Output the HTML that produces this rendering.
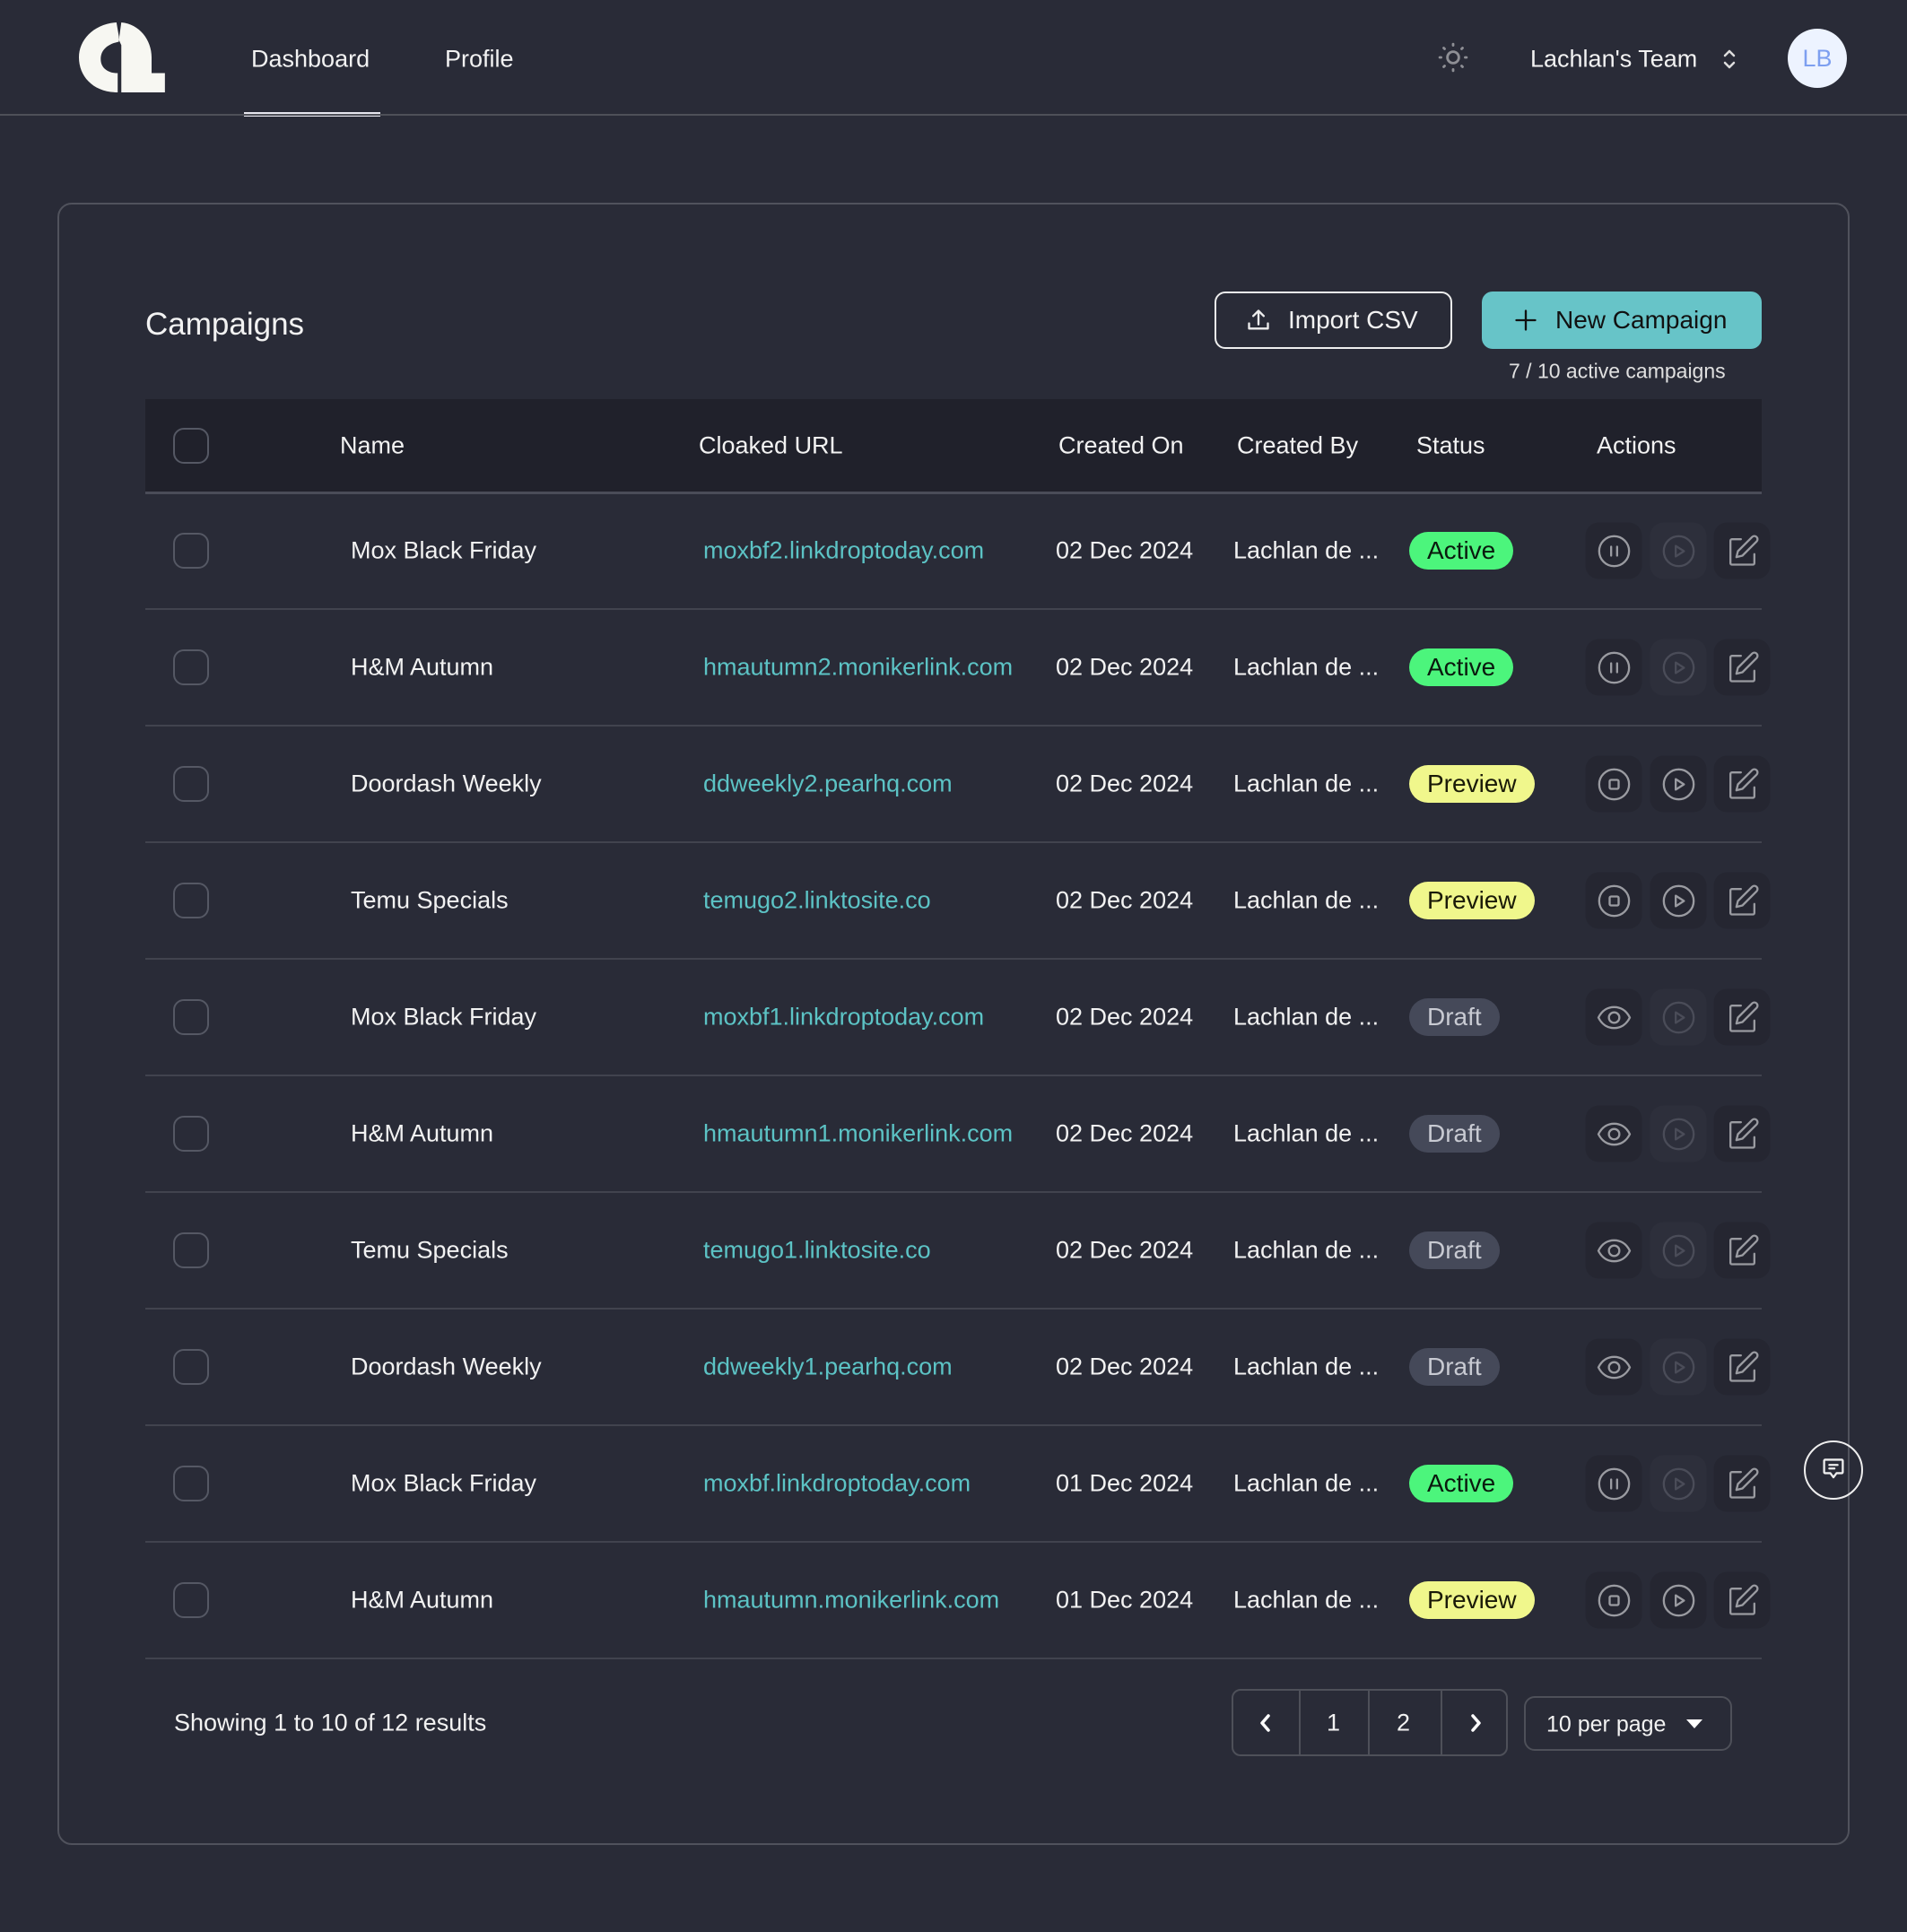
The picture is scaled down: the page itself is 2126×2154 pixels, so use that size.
<!DOCTYPE html>
<html><head><meta charset="utf-8"><style>
*{box-sizing:border-box;margin:0;padding:0}
body{width:2126px;height:2154px;background:#292b37;font-family:"Liberation Sans",sans-serif;color:#f2f2f2;position:relative;overflow:hidden}
.a{position:absolute}
.t{position:absolute;white-space:nowrap;transform:translateY(-50%)}
.hdr{font-size:27px}
.row{font-size:27px}
.cb{position:absolute;width:40px;height:40px;border:2px solid #555864;border-radius:12px}
.badge{position:absolute;height:42px;border-radius:21px;font-size:28px;line-height:42px;padding:0 20px;transform:translateY(-50%)}
.btn{position:absolute;width:63px;height:63px;border-radius:15px;background:#252631;transform:translate(-50%,-50%);display:flex;align-items:center;justify-content:center}
.btn.dis{background:#2d2f3b}
.line{position:absolute;left:162px;width:1802px;height:2px;background:#41434e}
</style></head><body>
<!-- header -->
<svg class="a" style="left:0;top:0" width="220" height="128"><g fill="#f7f7f2" transform="translate(88,25) scale(1.35,0.975) translate(-66,-24)">
<path d="M97 24 C78 26 66 44 66 64 C66 86 78 104 98 104 L98 82 C90 82 84 76 84 66 C84 56 89 49 99 46 L99 40 Z"/>
<path d="M101 24 C116 26 126 44 126 64 L126 82 L137 82 L137 104 L101 104 L101 50 L99 44 Z"/></g></svg>
<div class="t" style="left:280px;top:66px;font-size:27px">Dashboard</div>
<div class="a" style="left:272px;top:125px;width:152px;height:5px;background:#e6e6ee"></div>
<div class="t" style="left:496px;top:66px;font-size:27px">Profile</div>
<div class="a" style="left:0;top:127px;width:2126px;height:2px;background:#4e5058"></div>
<svg class="a" style="left:1603px;top:47px" width="34" height="34" viewBox="0 0 24 24" fill="none" stroke="#8e8f95" stroke-width="2" stroke-linecap="round"><circle cx="12" cy="12" r="4.5"/><path d="M12 1.5v1M12 21.5v1M1.5 12h1M21.5 12h1M4.6 4.6l.7.7M18.7 18.7l.7.7M4.6 19.4l.7-.7M18.7 5.3l.7-.7"/></svg>
<div class="t" style="left:1706px;top:66px;font-size:27px">Lachlan's Team</div>
<svg class="a" style="left:1919px;top:52px" width="18" height="28" viewBox="0 0 18 28" fill="none" stroke="#ddd" stroke-width="2.5" stroke-linecap="round" stroke-linejoin="round"><path d="M4 10l5-5 5 5M4 18l5 5 5-5"/></svg>
<div class="a" style="left:1993px;top:32px;width:66px;height:66px;border-radius:50%;background:#edf3ff;color:#7d9ff0;font-size:27px;line-height:66px;text-align:center">LB</div>
<!-- card -->
<div class="a" style="left:64px;top:226px;width:1998px;height:1831px;border:2px solid #50525c;border-radius:16px;background:#292b37"></div>
<div class="t" style="left:162px;top:362px;font-size:35px;font-weight:500">Campaigns</div>
<div class="a" style="left:1354px;top:325px;width:265px;height:64px;border:2px solid #eee;border-radius:12px"></div>
<svg class="a" style="left:1389px;top:343px" width="28" height="28" viewBox="0 0 24 24" fill="none" stroke="#eee" stroke-width="2" stroke-linecap="round" stroke-linejoin="round"><path d="M3 15v5h18v-5M12 16V3M7 8l5-5 5 5"/></svg>
<div class="t" style="left:1436px;top:357px;font-size:28px">Import CSV</div>
<div class="a" style="left:1652px;top:325px;width:312px;height:64px;border-radius:12px;background:#67c4c8"></div>
<svg class="a" style="left:1687px;top:343px" width="28" height="28" viewBox="0 0 24 24" stroke="#111" stroke-width="2" stroke-linecap="round"><path d="M12 3v18M3 12h18"/></svg>
<div class="t" style="left:1734px;top:357px;font-size:28px;color:#111">New Campaign</div>
<div class="t" style="left:1682px;top:414px;font-size:23px;color:#e0e0e0">7 / 10 active campaigns</div>
<!-- table header -->
<div class="a" style="left:162px;top:445px;width:1802px;height:104px;background:#20212b"></div>
<div class="a" style="left:162px;top:548px;width:1802px;height:3px;background:#4a4c58"></div>
<div class="cb" style="left:193px;top:477px"></div>
<div class="t hdr" style="left:379px;top:497px">Name</div>
<div class="t hdr" style="left:779px;top:497px">Cloaked URL</div>
<div class="t hdr" style="left:1180px;top:497px">Created On</div>
<div class="t hdr" style="left:1379px;top:497px">Created By</div>
<div class="t hdr" style="left:1579px;top:497px">Status</div>
<div class="t hdr" style="left:1780px;top:497px">Actions</div>
<div id="rows"></div>
<div class="line" style="top:1848px"></div>
<div class="t" style="left:194px;top:1921px;font-size:27px">Showing 1 to 10 of 12 results</div>
<div class="a" style="left:1373px;top:1883px;width:308px;height:75px;border:2px solid #4e5059;border-radius:10px"></div>
<div class="a" style="left:1448px;top:1883px;width:2px;height:75px;background:#4e5059"></div>
<div class="a" style="left:1525px;top:1883px;width:2px;height:75px;background:#4e5059"></div>
<div class="a" style="left:1606px;top:1883px;width:2px;height:75px;background:#4e5059"></div>
<svg class="a" style="left:1399px;top:1908px" width="24" height="26" viewBox="0 0 24 26" fill="none" stroke="#fff" stroke-width="3.5" stroke-linecap="round" stroke-linejoin="round"><path d="M15 5l-7 8 7 8"/></svg>
<div class="t" style="left:1479px;top:1921px;font-size:27px">1</div>
<div class="t" style="left:1557px;top:1921px;font-size:27px">2</div>
<svg class="a" style="left:1633px;top:1908px" width="24" height="26" viewBox="0 0 24 26" fill="none" stroke="#fff" stroke-width="3.5" stroke-linecap="round" stroke-linejoin="round"><path d="M9 5l7 8-7 8"/></svg>
<div class="a" style="left:1699px;top:1891px;width:232px;height:61px;border:2px solid #4e5059;border-radius:12px"></div>
<div class="t" style="left:1724px;top:1923px;font-size:25px">10 per page</div>
<svg class="a" style="left:1880px;top:1916px" width="18" height="12"><path d="M0 1h18L9 11z" fill="#fff"/></svg>
<div class="a" style="left:2011px;top:1606px;width:66px;height:66px;border:2px solid #eee;border-radius:50%"></div>
<svg class="a" style="left:2030px;top:1624px" width="28" height="30" viewBox="0 0 24 26" fill="none" stroke="#eee" stroke-width="2" stroke-linejoin="round" stroke-linecap="round"><path d="M4 3h16a1 1 0 0 1 1 1v11a1 1 0 0 1-1 1h-5l-3 4-3-4H4a1 1 0 0 1-1-1V4a1 1 0 0 1 1-1zM8 8h8M8 11.5h5"/></svg>
<script>
var d=[["Mox Black Friday","moxbf2.linkdroptoday.com","02 Dec 2024","A"],["H&amp;M Autumn","hmautumn2.monikerlink.com","02 Dec 2024","A"],["Doordash Weekly","ddweekly2.pearhq.com","02 Dec 2024","P"],["Temu Specials","temugo2.linktosite.co","02 Dec 2024","P"],["Mox Black Friday","moxbf1.linkdroptoday.com","02 Dec 2024","D"],["H&amp;M Autumn","hmautumn1.monikerlink.com","02 Dec 2024","D"],["Temu Specials","temugo1.linktosite.co","02 Dec 2024","D"],["Doordash Weekly","ddweekly1.pearhq.com","02 Dec 2024","D"],["Mox Black Friday","moxbf.linkdroptoday.com","01 Dec 2024","A"],["H&amp;M Autumn","hmautumn.monikerlink.com","01 Dec 2024","P"]];
var G='#9a9ba1',DG='#4a4c58';
function ic(type,c){var s='<svg width="40" height="40" viewBox="0 0 24 24" fill="none" stroke="'+c+'" stroke-width="1.4" stroke-linecap="round" stroke-linejoin="round">';
if(type=='pause')s+='<circle cx="12" cy="12" r="10"/><path d="M10 9v6M14 9v6"/>';
if(type=='stop')s+='<circle cx="12" cy="12" r="10"/><rect x="9" y="9" width="6" height="6" rx="1"/>';
if(type=='play')s+='<circle cx="12" cy="12" r="10"/><path d="M10 8.5l5.5 3.5-5.5 3.5z"/>';
if(type=='eye')s+='<path d="M1.5 12C4 7 8 5 12 5s8 2 10.5 7c-2.5 5-6.5 7-10.5 7S4 17 1.5 12z"/><circle cx="12" cy="12" r="3.5"/>';
if(type=='edit')s+='<path d="M11 4H5a1 1 0 0 0-1 1v15a1 1 0 0 0 1 1h14a1 1 0 0 0 1-1v-6"/><path d="M18.5 2.5a2.1 2.1 0 0 1 3 3L12 15l-4 1 1-4z"/>';
return s+'</svg>';}
var h='';
d.forEach(function(r,i){var top=549+i*130,cy=top+65;
h+='<div class="cb" style="left:193px;top:'+(cy-20)+'px"></div>';
h+='<div class="t row" style="left:391px;top:'+cy+'px">'+r[0]+'</div>';
h+='<div class="t row" style="left:784px;top:'+cy+'px;color:#5cc3c5">'+r[1]+'</div>';
h+='<div class="t row" style="left:1177px;top:'+cy+'px">'+r[2]+'</div>';
h+='<div class="t row" style="left:1375px;top:'+cy+'px">Lachlan de ...</div>';
var b=r[3]=='A'?['Active','#4cf57c','#0a1a0e']:r[3]=='P'?['Preview','#f0f78c','#1a1a08']:['Draft','#454959','#c8cad2'];
h+='<div class="badge" style="left:1571px;top:'+cy+'px;background:'+b[1]+';color:'+b[2]+'">'+b[0]+'</div>';
var f=r[3]=='A'?'pause':r[3]=='P'?'stop':'eye';
h+='<div class="btn" style="left:1799px;top:'+cy+'px">'+ic(f,G)+'</div>';
var en=r[3]=='P';
h+='<div class="btn'+(en?'':' dis')+'" style="left:1871px;top:'+cy+'px">'+ic('play',en?G:DG)+'</div>';
h+='<div class="btn" style="left:1942px;top:'+cy+'px">'+ic('edit',G)+'</div>';
if(i<9)h+='<div class="line" style="top:'+(top+129)+'px"></div>';
});
document.getElementById('rows').innerHTML=h;
</script>
</body></html>
